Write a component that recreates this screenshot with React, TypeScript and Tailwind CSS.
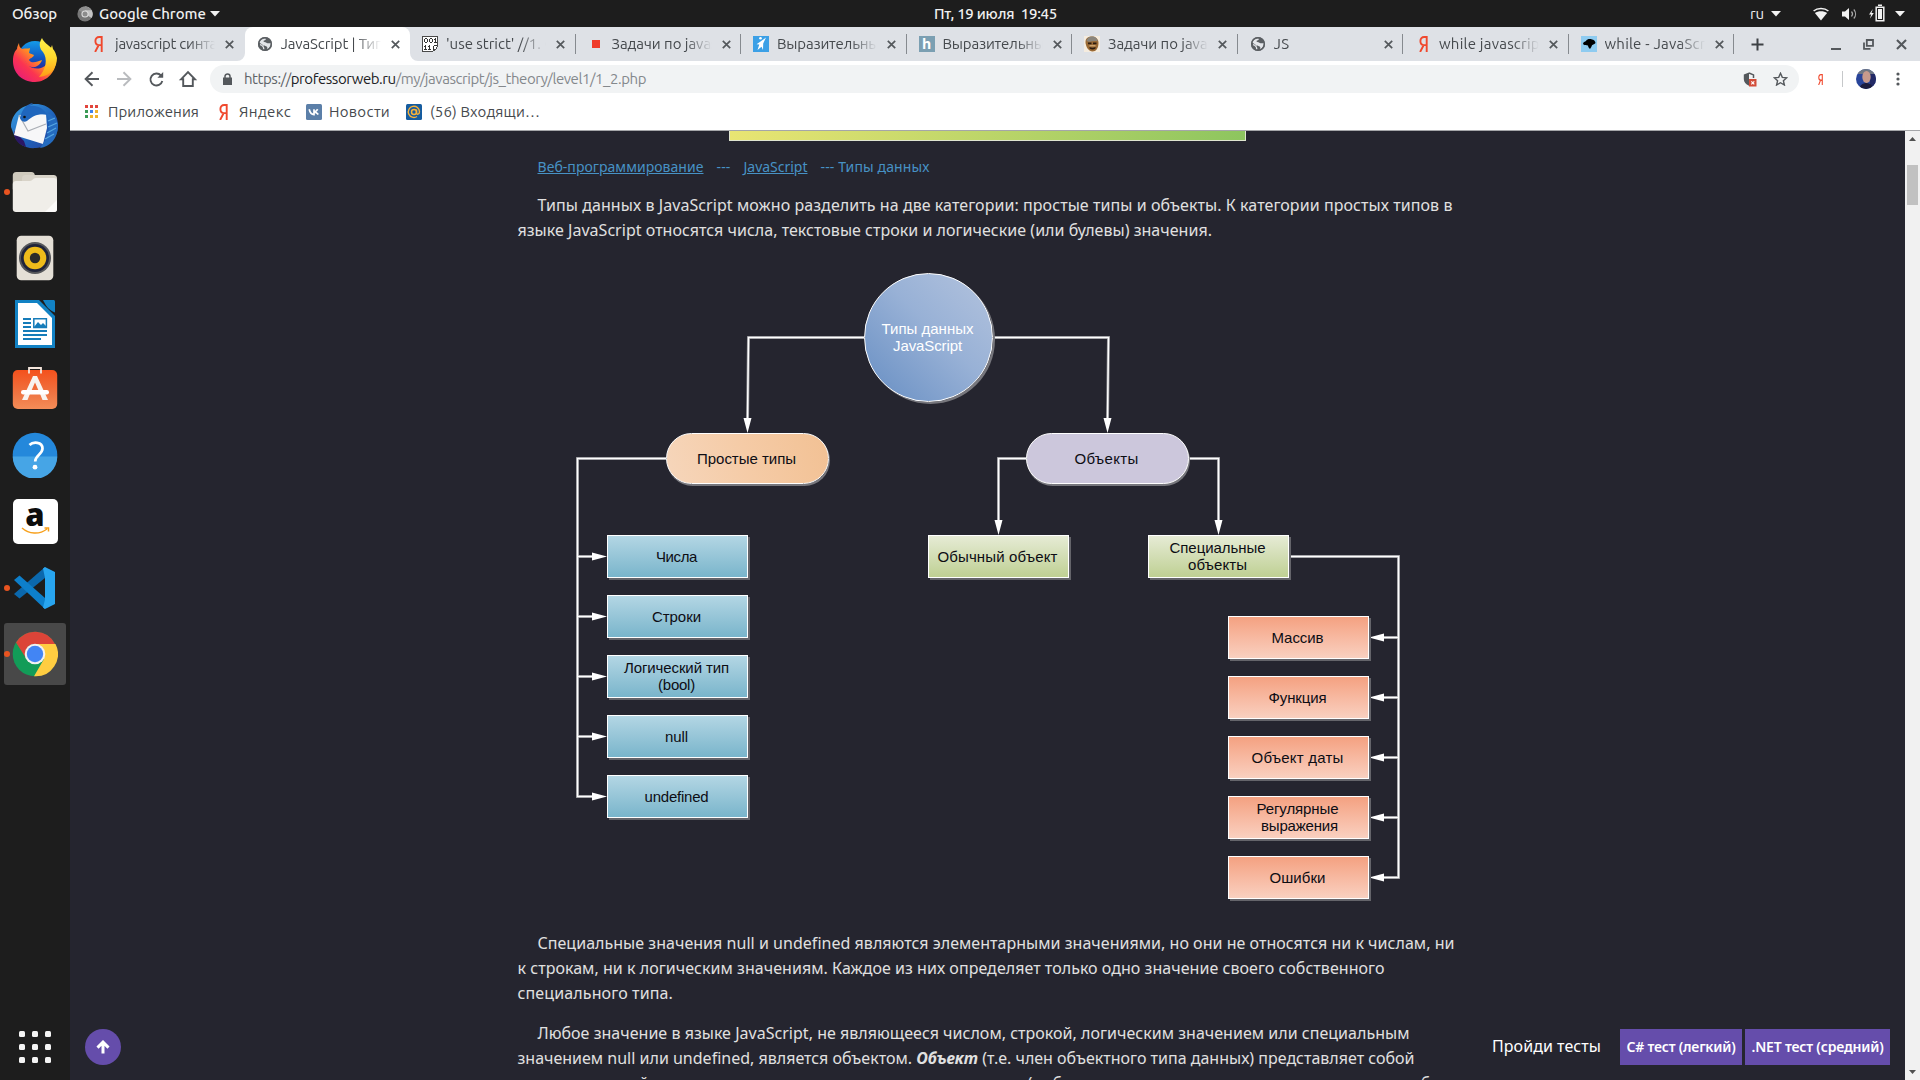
import React, { useLayoutEffect, useRef, useState } from "react";

/* Single line of text whose tracking is adjusted so that it fills `w` pixels. */
function Fit({ w, className = "", children }: { w: number; className?: string; children: React.ReactNode }) {
  const ref = useRef<HTMLSpanElement>(null);
  const [spacing, setSpacing] = useState(0);
  useLayoutEffect(() => {
    const el = ref.current;
    if (!el) return;
    const n = (el.textContent || "").length;
    setSpacing((w - el.getBoundingClientRect().width) / n);
  }, [w]);
  return (
    <span ref={ref} className={"inline-block whitespace-pre " + className} style={{ letterSpacing: spacing }}>
      {children}
    </span>
  );
}

const Caret = () => (
  <svg width="10" height="6" viewBox="0 0 10 6" className="shrink-0">
    <path d="M0 0h10L5 5.6z" fill="#f2f2f2" />
  </svg>
);

const Ya = ({ h = 16, w = 9 }: { h?: number; w?: number }) => (
  <svg width={w} height={h} viewBox="0 0 9 16" preserveAspectRatio="none">
    <path d="M7.7 0v16M7.7 1H5.2C2.9 1 1.4 2.6 1.4 5s1.4 4.1 3.6 4.1h2.7M4.6 9.2L1.1 16" fill="none" stroke="#f0482d" strokeWidth="1.9" />
  </svg>
);

const Globe = () => (
  <svg width="16" height="16" viewBox="0 0 16 16">
    <circle cx="8" cy="8" r="7" fill="#5b5f63" />
    <path d="M8.5 2.3c1 1.3-.2 2-1.3 2.3-1 .3-.8 1.4.2 1.5 1.6.1 1.8 1 3.2 1.2 1.5.2 2.9-.2 3.3-.6.2 3-1.3 5.600-3.500 6.600-.4-1.100.4-2.200-.8-2.800-1.600-.7-3.600-.2-4-1.700L2.200 6.400C2.900 4 5.300 2.100 8.500 2.300z" fill="#e4e6ea" />
    <path d="M3 8.700c1.500.1 2.400 1 3.300 2.300.5.8.2 1.700.6 2.600" fill="none" stroke="#e4e6ea" strokeWidth="1.300" />
    <circle cx="8" cy="8" r="6.300" fill="none" stroke="#5b5f63" strokeWidth="1.500" />
  </svg>
);

const Binary = () => (
  <svg width="16" height="16" viewBox="0 0 16 16" shapeRendering="crispEdges">
    <path d="M0 0h16v11h-1v2h-1v1h-1v1h-2v1H0z" fill="#4a4a4a" />
    <path d="M1 1h14v10h-1v2h-2v1h-1v1H1z" fill="#fff" />
    <path d="M3 2h2v1H3zM3 6h2v1H3zM2 3h1v3H2zM5 3h1v3H5zM8 2h2v1H8zM8 6h2v1H8zM7 3h1v3H7zM10 3h1v3h-1zM13 2h1v4h-1zM12 3h1v1h-1zM12 6h3v1h-3zM3 9h1v4H3zM2 10h1v1H2zM2 13h3v1H2zM7 9h1v4H7zM6 10h1v1H6zM6 13h3v1H6zM11 10h1v4h-1zM12 9h3v1h-3z" fill="#333" />
  </svg>
);

const icons: Record<string, React.ReactNode> = {
  ya: <Ya />,
  globe: <Globe />,
  binary: <Binary />,
  red: <span className="block h-2 w-2 bg-[#ef3b2a]" />,
  blue: (
    <svg width="16" height="16" viewBox="0 0 16 16">
      <path d="M0 0h16v16H0z" fill="#3ca0e6" />
      <circle cx="7.500" cy="2.200" r="1.300" fill="#fff" />
      <path d="M13 1.500L8.200 5 3.600 8.200l2.700.2L4.500 14l4-3.200L10 14l.2-6.500z" fill="#fff" />
    </svg>
  ),
  h: (
    <span className="flex h-4 w-4 items-center justify-center bg-[#7b9fb2] font-['Open_Sans',sans-serif] text-[14px] leading-none font-bold text-white">
      h
    </span>
  ),
  face: (
    <svg width="16" height="16" viewBox="0 0 16 16">
      <path d="M0 0h16v16H0z" fill="#f5ecdf" />
      <path d="M1.500 6c0-4 3-5.500 6.500-5.500S14.500 3 14.500 7c0 5-2.500 8.500-6 8.500S1.500 11 1.500 6z" fill="#9a6a35" />
      <path d="M2.500 5c1-4 4-4.500 6-4.500 3 0 5 2 5.200 5C10 4 6 7 2.500 5z" fill="#8a857c" />
      <path d="M4 6.500h3.500v1.700H4zM9 6.500h3.500v1.700H9zM5.500 11c2 1 4 1 6 0v1.500c-2 1.200-4 1.200-6 0z" fill="#2c1c10" />
      <path d="M5.500 9.300h6v1h-6z" fill="#e2bd88" />
    </svg>
  ),
  bird: (
    <svg width="16" height="16" viewBox="0 0 16 16">
      <path d="M0 0h16v16H0z" fill="#8ecbf0" />
      <path d="M2 8c0-2 2-2.500 3-3 1-2 4-2.500 6-1.500 1.500.2 3.500 1.500 3.500 3.500-.8 1.500-2.500 1.300-3.500 2.300-.5 1.200-1 2.700-2 3.700-1-1-2-2-2-3.500C5 9 3 9.500 2 8z" fill="#000" />
    </svg>
  ),
};

const tabs = [
  { icon: "ya", text: "javascript синтакс", w: 116 },
  { icon: "globe", text: "JavaScript | Типы", w: 114, active: true },
  { icon: "binary", text: "'use strict' //1. О", w: 110 },
  { icon: "red", text: "Задачи по javasc", w: 113 },
  { icon: "blue", text: "Выразительный", w: 111 },
  { icon: "h", text: "Выразительный", w: 111 },
  { icon: "face", text: "Задачи по javasc", w: 113 },
  { icon: "globe", text: "JS", w: 16 },
  { icon: "ya", text: "while javascript", w: 107 },
  { icon: "bird", text: "while - JavaScript", w: 120 },
];

const Cross = ({ s = 9 }: { s?: number }) => (
  <svg width={s} height={s} viewBox="0 0 9 9">
    <path d="M.8.8l7.400 7.400M8.200.8L.8 8.200" stroke="#54585c" strokeWidth="1.700" />
  </svg>
);

function TopBar() {
  return (
    <div className="flex h-[27px] items-center bg-[#1d1d1d] text-[15px] leading-[27px] font-medium text-[#f0f0f0]">
      <div className="w-[77px] pl-3"><Fit w={45}>Обзор</Fit></div>
      <svg width="16" height="16" viewBox="0 0 16 16">
        <circle cx="8" cy="8" r="7.600" fill="#777" />
        <path d="M8 8V.4A7.600 7.600 0 0 1 14.600 12z" fill="#c4c4c4" />
        <path d="M8 8L1.400 4.300A7.600 7.600 0 0 1 14.600 4.300H8z" fill="#8f8f8f" />
        <circle cx="8" cy="8" r="3.600" fill="#ddd" /><circle cx="8" cy="8" r="2.500" fill="#8c8c8c" />
      </svg>
      <div className="flex w-[841px] items-center gap-[4px] pl-[6px]"><Fit w={107}>Google Chrome</Fit><Caret /></div>
      <Fit w={123}>{"Пт, 19 июля  19:45"}</Fit>
      <div className="ml-auto flex items-center pr-[15px]">
        <Fit w={14} className="font-normal">ru</Fit>
        <div className="mr-8 ml-[7px] flex"><Caret /></div>
        <svg width="16" height="14" viewBox="0 0 16 14" className="mr-[13px]">
          <path d="M8 13.500L1.900 6C5 3.600 11 3.600 14.100 6z" fill="#f2f2f2" />
          <path d="M.6 4C4.500.6 11.500.6 15.400 4" fill="none" stroke="#f2f2f2" strokeWidth="1.500" />
        </svg>
        <svg width="15" height="14" viewBox="0 0 15 14" className="mr-3">
          <path d="M0 4.500h3L7 1v12L3 9.500H0z" fill="#f2f2f2" />
          <path d="M9.500 4.500c1.300 1.500 1.300 3.500 0 5M11.800 2.500c2.300 2.600 2.300 6.400 0 9" fill="none" stroke="#aaa" strokeWidth="1.200" />
        </svg>
        <svg width="16" height="18" viewBox="0 0 16 18" className="mr-[10px] mb-[2px]">
          <path d="M3.800 5L0 10.500h2.200L1 14.500l3.800-5.500H2.500z" fill="#f2f2f2" />
          <path d="M7.200 3.200h7.600v13.600H7.200zM9 1.300h4" fill="none" stroke="#f2f2f2" strokeWidth="1.500" />
          <path d="M9 5h4v10H9z" fill="#f2f2f2" />
        </svg>
        <Caret />
      </div>
    </div>
  );
}

function TabStrip() {
  return (
    <div className="flex h-[34px] bg-[#dee1e6] pl-[9px] text-[#45494d]">
      {tabs.map((t, i) => (
        <div
          key={i}
          className={
            "relative flex h-[34px] w-[165.5px] shrink-0 items-center pl-3 " +
            (t.active ? "rounded-t-lg bg-white" : i > 1 ? "after:absolute after:top-[7px] after:right-0 after:h-5 after:w-px after:bg-[#868a8f]" : "")
          }
        >
          {t.active && (
            <>
              <svg className="absolute bottom-0 -left-2" width="8" height="8"><path d="M8 0v8H0a8 8 0 0 0 8-8z" fill="#fff" /></svg>
              <svg className="absolute -right-2 bottom-0" width="8" height="8"><path d="M0 0v8h8a8 8 0 0 1-8-8z" fill="#fff" /></svg>
            </>
          )}
          <div className={"flex w-4 justify-center " + (i === 0 ? "-ml-px mr-px" : "")}>{icons[t.icon]}</div>
          <div className="ml-[8px] w-[100px] overflow-hidden text-[15px] leading-[34px] [mask-image:linear-gradient(to_right,#000_74%,transparent)]">
            <Fit w={t.w}>{t.text}</Fit>
          </div>
          <div className="ml-[10px] flex"><Cross /></div>
        </div>
      ))}
      <div className="flex flex-1 items-center pr-[13px] pl-[17px]">
        <svg width="13" height="13" viewBox="0 0 13 13"><path d="M6.500.5v12M.5 6.500h12" stroke="#3d4145" strokeWidth="2" /></svg>
        <div className="mt-[9px] ml-auto h-[2px] w-[10px] bg-[#54585c]" />
        <svg width="11" height="11" viewBox="0 0 11 11" className="mr-[22px] ml-[22px]">
          <path d="M3.800 1h6.200v5.800H3.800zM1 3.500v6.300h6.500" fill="none" stroke="#54585c" strokeWidth="1.800" />
        </svg>
        <Cross s={11} />
      </div>
    </div>
  );
}

function Toolbar() {
  return (
    <div className="flex h-8 items-center bg-white pt-1 pl-[14px]">
      <svg width="114" height="18" viewBox="0 0 114 18" fill="none" stroke="#54585c" strokeWidth="1.900">
        <path d="M15 9H2M8.500 2.200L1.600 9l6.900 6.800" />
        <path d="M33 9h13M39.500 2.200L46.400 9l-6.900 6.800" stroke="#b9bbbe" />
        <path d="M77 5.500A6 6 0 1 0 78.300 11" />
        <path d="M79.200 2v5.800h-5.800z" fill="#54585c" stroke="none" />
        <path d="M97 9.300L104 2l7 7.300h-2.200V16h-9.600V9.300z" />
      </svg>
      <div className="ml-3 flex h-7 w-[1589px] items-center rounded-full bg-[#f1f3f4] pr-[11px] pl-[13px]">
        <svg width="9" height="12" viewBox="0 0 9 12">
          <path d="M0 4.500h9V12H0z" fill="#54585c" /><path d="M2 5V3.200C2 .1 7 .1 7 3.200V5" fill="none" stroke="#54585c" strokeWidth="1.500" />
        </svg>
        <div className="ml-[12px] text-[15px] leading-7 text-[#84888c]">
          <Fit w={402}><span className="text-[#5f6368]">https://</span><span className="text-[#202124]">professorweb.ru</span>/my/javascript/js_theory/level1/1_2.php</Fit>
        </div>
        <svg width="14" height="15" viewBox="0 0 14 15" className="ml-auto">
          <path d="M6 .5L.8 2.600V7c0 3 2 5.600 5.200 6.700z" fill="#54585c" />
          <path d="M6 1l4.500 1.900V6" fill="none" stroke="#54585c" strokeWidth="1.500" />
          <path d="M6 7h7.500v7.500H6z" fill="#d24c38" /><path d="M8.300 9.300l3 3M11.300 9.300l-3 3" stroke="#fff" strokeWidth="1.200" />
        </svg>
        <svg width="15" height="14" viewBox="0 0 15 14" className="ml-4">
          <path d="M7.500 1.300l1.800 4.100 4.400.4-3.300 2.900 1 4.300-3.900-2.300L3.600 13l1-4.300L1.300 5.800l4.400-.4z" fill="none" stroke="#54585c" strokeWidth="1.400" />
        </svg>
      </div>
      <div className="ml-[19px] flex"><Ya h={11} w={5} /></div>
      <div className="ml-[19px] h-4 w-px bg-[#c6c8ca]" />
      <svg width="20" height="20" viewBox="0 0 20 20" className="ml-[13px]">
        <defs><clipPath id="av"><circle cx="10" cy="10" r="10" /></clipPath></defs>
        <g clipPath="url(#av)">
          <path d="M0 0h20v20H0z" fill="#28449a" /><path d="M0 0h20v5H0z" fill="#6f7783" />
          <path d="M14 5h6v12h-6z" fill="#232a66" />
          <ellipse cx="10.500" cy="8" rx="4.200" ry="6" fill="#c79a8c" />
          <path d="M3 20c1-4 4-6 7.500-6s6 2 7 6z" fill="#1b1c3d" />
        </g>
      </svg>
      <svg width="4" height="14" viewBox="0 0 4 14" className="ml-5"><g fill="#54585c"><circle cx="2" cy="2" r="1.600" /><circle cx="2" cy="7" r="1.600" /><circle cx="2" cy="12" r="1.600" /></g></svg>
    </div>
  );
}

const appDots = ["#e2453c", "#e2453c", "#e2453c", "#3b9a55", "#3f82ec", "#efb22c", "#3b9a55", "#efb22c", "#efb22c"];

function Bookmarks() {
  return (
    <div className="flex h-[38px] items-center border-b border-[#a5a6a9] bg-white pl-[15px] text-[15px] leading-[37px] text-[#45494d]">
      <div className="grid grid-cols-3 gap-[2px]">
        {appDots.map((c, i) => <span key={i} className="h-[3px] w-[3px]" style={{ background: c }} />)}
      </div>
      <Fit w={91} className="ml-[10px]">Приложения</Fit>
      <div className="ml-[20px] flex"><Ya /></div>
      <Fit w={52} className="ml-[11px]">Яндекс</Fit>
      <svg width="16" height="16" viewBox="0 0 16 16" className="ml-[15px]">
        <rect width="16" height="16" rx="1.500" fill="#5b7fa8" />
        <path d="M3.200 5.300C4 8.800 5.700 10.600 8 10.600V5.300M8 8c1.600-.2 2.700-1.200 3.700-2.700M8.300 7.800c1.800.2 2.900 1.300 4 2.800" fill="none" stroke="#fff" strokeWidth="1.700" />
      </svg>
      <Fit w={61} className="ml-[7px]">Новости</Fit>
      <svg width="16" height="16" viewBox="0 0 16 16" className="ml-[16px]">
        <rect width="16" height="16" rx="1.500" fill="#165c9f" />
        <circle cx="8" cy="8" r="2.500" fill="none" stroke="#fbb338" strokeWidth="1.500" />
        <path d="M10.500 5.500v3.300c0 2.200 3 1.800 3-1A5.600 5.600 0 1 0 11 12.500" fill="none" stroke="#fbb338" strokeWidth="1.400" />
      </svg>
      <Fit w={110} className="ml-[8px]">(56) Входящи…</Fit>
    </div>
  );
}

const dockIcons: { dot?: boolean; active?: boolean; shift?: string; art: React.ReactNode }[] = [
  { shift: "pb-[3px]", art: (
    <svg width="48" height="48" viewBox="0 0 48 48">
      <defs>
        <linearGradient id="ff1" x1="1" y1="0" x2="0" y2="1"><stop offset="0" stopColor="#ffd93b" /><stop offset=".4" stopColor="#ff9a1f" /><stop offset=".65" stopColor="#fb3550" /><stop offset="1" stopColor="#e0128a" /></linearGradient>
        <linearGradient id="ff2" x1="0" y1="0" x2="0" y2="1"><stop offset="0" stopColor="#149bea" /><stop offset=".6" stopColor="#1149b8" /><stop offset="1" stopColor="#38127a" /></linearGradient>
        <linearGradient id="ff3" x1="0" y1="0" x2="0" y2="1"><stop offset="0" stopColor="#fff04a" /><stop offset=".5" stopColor="#ffd92e" /><stop offset="1" stopColor="#ff9b16" /></linearGradient>
      </defs>
      <circle cx="24" cy="23" r="17" fill="url(#ff2)" />
      <path d="M8 8c0 3 1 5 3 6 3-1 6 0 8-1l-1 5 5 2c-1 3-4 3-5 5 2 4 8 2 13 0-3 9-14 10-17 0 2 10 20 13 25-1 2-5 0-9-2-13 5 2 7 6 8 13 1 12-9 23-21 23C10 47 2 37 2 26 2 19 4 16 6 14c0-2 1-4 2-6z" fill="url(#ff1)" />
      <path d="M31 3c-4 6-2 11 1 14 5 7 3 17-4 25 12-1 18-10 18-19-1-4-2-7-4-9l-1-4-1 3C37 9 33 8 31 3z" fill="url(#ff3)" />
    </svg>
  ) },
  { art: (
    <svg width="50" height="50" viewBox="0 0 50 50">
      <defs><linearGradient id="tb" x1="0" y1="0" x2="1" y2="1"><stop offset="0" stopColor="#3aa0e4" /><stop offset=".6" stopColor="#1d5fb8" /><stop offset="1" stopColor="#2a3f9c" /></linearGradient></defs>
      <path d="M4 34c4 10 12 14 22 13 14-1 22-11 22-23S38 3 26 3C13 3 1 12 1 26z" fill="url(#tb)" />
      <path d="M4 30c-1 8 5 14 12 16l-2-6z" fill="#2a1764" />
      <path d="M9 14l27-1 1 14-4 16L4 34z" fill="#f7f7f8" />
      <path d="M9 14l9 16 18-7" fill="none" stroke="#aaaeb5" strokeWidth="1.200" />
      <path d="M10 17C12 8 17 3 23 2l-3 3c8-1 14 3 17 9-8-2-14 1-20 6-3 2-6 0-7-3z" fill="#1f66bd" />
      <path d="M36 12c4 6 4 16 0 26l-6 9c10-1 18-10 18-22 0-6-6-12-12-13z" fill="#246bbf" />
      <path d="M38 20l7-3M38 26l9-4M37 32l9-5M35 38l9-5" stroke="#56a6e0" strokeWidth="1.200" />
      <circle cx="14.500" cy="16" r="1.300" fill="#111" />
    </svg>
  ) },
  { dot: true, art: (
    <svg width="46" height="42" viewBox="0 0 46 42">
      <rect x=".8" y="1" width="22" height="20" rx="3.500" fill="#cfcabd" /><rect x="10" y="4" width="35" height="20" rx="3.500" fill="#d8d3c8" />
      <path d="M.8 13c0-2 1.500-3 3-3h14c3 0 3-3 6-3h18c2 0 3.200 1.200 3.200 3v28c0 2-1 3-3 3H4c-2 0-3.200-1-3.200-3z" fill="#f0eee9" />
      <path d="M45 29v9c0 2-1 3-3 3h-9z" fill="#fbfaf8" />
    </svg>
  ) },
  { art: (
    <svg width="38" height="46" viewBox="0 0 38 46">
      <rect x=".7" y=".7" width="36.600" height="44.600" rx="4.500" fill="#e4dfd6" /><circle cx="19" cy="23" r="16" fill="#56575a" /><circle cx="19" cy="23" r="14" fill="#20243a" /><circle cx="19" cy="23" r="11.300" fill="#eebb1b" /><circle cx="19" cy="23" r="5.200" fill="#2a2a2a" />
    </svg>
  ) },
  { art: (
    <svg width="40" height="48" viewBox="0 0 40 48">
      <path d="M0 0h25l15 15v33H0z" fill="#1282c4" /><path d="M3 3h19l15 15v27H3z" fill="#fff" />
      <path d="M24 0h16v16z" fill="#1d1d1d" /><path d="M28 0h10c1.500 0 2 .5 2 2v10.500c-5-1.500-9-6-12-12.500z" fill="#1282c4" />
      <path d="M8 19h8M8 23h8M8 27h8M8 31h24M8 35h24M8 39h18" stroke="#167cb9" strokeWidth="1.800" />
      <path d="M18.800 18.800h12.600v8.600H18.800z" fill="none" stroke="#167cb9" strokeWidth="1.500" /><path d="M19 27l4-5 3 3 2-2 4 4z" fill="#167cb9" />
    </svg>
  ) },
  { shift: "pb-[5px]", art: (
    <svg width="46" height="44" viewBox="0 0 46 44">
      <defs><linearGradient id="sw" x1="0" y1="0" x2="0" y2="1"><stop offset="0" stopColor="#f4511c" /><stop offset=".6" stopColor="#ef7442" /><stop offset="1" stopColor="#f48d58" /></linearGradient></defs>
      <rect x=".8" y="4" width="44.400" height="39" rx="5" fill="url(#sw)" />
      <path d="M17 7.500V2h12v5.500" fill="none" stroke="#f4e6dc" strokeWidth="1.800" />
      <path d="M21 10h4l11 24h-5.500l-2-5-5.500-12.500L17.500 29l-2 5H10z" fill="#f8f3ef" />
      <rect x="9" y="24" width="28" height="4.500" rx="2.200" fill="#fff" />
    </svg>
  ) },
  { shift: "pb-[2px]", art: (
    <svg width="46" height="46" viewBox="0 0 46 46">
      <circle cx="23" cy="23" r="22.300" fill="#2488db" /><path d="M.7 24.500h44.600a22.300 22.300 0 0 1-44.600 0z" fill="#46a5e6" />
      <path d="M17.500 13c3.500-3.500 13-3.500 13 3.500 0 6-7.300 6.500-7.300 13" fill="none" stroke="#fff" strokeWidth="2.700" /><circle cx="23" cy="35.200" r="2.400" fill="#fff" />
    </svg>
  ) },
  { shift: "pb-[2px]", art: (
    <div className="flex h-[45px] w-[45px] flex-col items-center rounded-[5px] bg-white pt-[3px]">
      <span className="font-['Open_Sans',sans-serif] text-[31px] leading-[24px] font-extrabold text-[#0c0c0c]">a</span>
      <svg width="29" height="8" viewBox="0 0 29 8" className="mt-px"><path d="M1 1c7 6 17 7 25 1M23.500 1h4v3.500" fill="none" stroke="#f7a01b" strokeWidth="1.500" /></svg>
    </div>
  ) },
  { dot: true, shift: "pr-[2px]", art: (
    <svg width="44" height="44" viewBox="0 0 44 44">
      <path d="M2 28l5.500 4.500L33 12V1z" fill="#0b68ad" /><path d="M2 14l5.500-4.500L33 32v11z" fill="#0d7fcb" />
      <path d="M33 1l10 5v32l-10 5-2-1.500 2-8V12l-2-9.500z" fill="#28a5ef" />
    </svg>
  ) },
  { dot: true, active: true, art: (
    <svg width="46" height="46" viewBox="0 0 46 46">
      <circle cx="23" cy="23" r="22.300" fill="#129c58" />
      <path d="M23 13h20.500A22.300 22.300 0 0 1 22 45.300L32 28z" fill="#ffcd41" />
      <path d="M4 11.500A22.300 22.300 0 0 1 43 13H23a10 10 0 0 0-9 6z" fill="#dc4438" /><path d="M4 11.500L14.500 28 14 17z" fill="#dc4438" />
      <circle cx="23" cy="23" r="10.300" fill="#f1f1f1" /><circle cx="23" cy="23" r="8.200" fill="#4285f4" />
    </svg>
  ) },
];

function Dock() {
  return (
    <div className="flex w-[70px] shrink-0 flex-col items-center bg-[#1d1d1d]">
      {dockIcons.map((d, i) => (
        <div key={i} className="relative flex h-[66px] w-full items-center justify-center">
          <div className={"flex h-[62px] w-[62px] items-center justify-center rounded-[3px] " + (d.shift ?? "") + (d.active ? " bg-[#484848]" : "")}>{d.art}</div>
          {d.dot && <span className="absolute top-[30px] left-[4px] h-[6px] w-[6px] rounded-full bg-[#e95420]" />}
        </div>
      ))}
      <div className="mt-auto mb-[17px] grid grid-cols-3 gap-[7px]">
        {Array.from({ length: 9 }, (_, i) => <span key={i} className="h-[6px] w-[6px] rounded-[1.5px] bg-[#f4f4f4]" />)}
      </div>
    </div>
  );
}

/* Origin of the diagram's canvas. */
const OX = 517;
const OY = 255;

const blue = "bg-linear-to-b from-[#b3d6e4] to-[#79b5cb]";
const green = "bg-linear-to-b from-[#e6ebd5] to-[#bfd093]";
const orange = "bg-linear-to-b from-[#f4a181] to-[#f9d0c0]";
const nodes = [
  { x: 607, y: 535, c: blue, t: ["Числа"], w: [41] },
  { x: 607, y: 595, c: blue, t: ["Строки"], w: [49] },
  { x: 607, y: 655, c: blue, t: ["Логический тип", "(bool)"], w: [105, 37] },
  { x: 607, y: 715, c: blue, t: ["null"], w: [23] },
  { x: 607, y: 775, c: blue, t: ["undefined"], w: [64] },
  { x: 928, y: 535, c: green, t: ["Обычный объект"], w: [120] },
  { x: 1148, y: 535, c: green, t: ["Специальные", "объекты"], w: [96, 59] },
  { x: 1228, y: 616, c: orange, t: ["Массив"], w: [52] },
  { x: 1228, y: 676, c: orange, t: ["Функция"], w: [58] },
  { x: 1228, y: 736, c: orange, t: ["Объект даты"], w: [92] },
  { x: 1228, y: 796, c: orange, t: ["Регулярные", " выражения"], w: [82, 81] },
  { x: 1228, y: 856, c: orange, t: ["Ошибки"], w: [56] },
];

const wires =
  "M864 337.500H748.500L747.500 420M993 337.500H1108.500L1107.500 420M666 458.500H577.500V796.500H594" +
  "M577.500 556.500H594M577.500 616.500H594M577.500 676.500H594M577.500 736.500H594" +
  "M1026 458.500H998.500V522M1189 458.500H1218.500V522M1289 556.500H1398.500V877.500H1384" +
  "M1398.500 637.500H1384M1398.500 697.500H1384M1398.500 757.500H1384M1398.500 817.500H1384";
const down = (x: number, y: number) => `M${x} ${y}l-4-15h8z`;
const heads = [
  down(747.5, 433), down(1107.5, 433), down(998.5, 535), down(1218.5, 535),
  ...[556.5, 616.5, 676.5, 736.5, 796.5].map((y) => `M607 ${y}l-15-4v8z`),
  ...[637.5, 697.5, 757.5, 817.5, 877.5].map((y) => `M1369 ${y}l15-4v8z`),
].join("");

function Diagram() {
  return (
    <div className="relative h-[661px] w-[940px] font-['Liberation_Sans',sans-serif] text-[15px] leading-[17px] text-[#0d0d14]">
      <svg className="absolute inset-0" width="940" height="661" viewBox="517 255 940 661">
        <path d={wires} fill="none" stroke="#8d8d92" strokeWidth="3" />
        <path d={wires} fill="none" stroke="#fff" strokeWidth="1.500" />
        <path d={heads} fill="#fff" />
      </svg>
      <div className="absolute top-[18px] left-[347px] flex h-[129px] w-[129px] flex-col items-center justify-center rounded-full border border-white bg-linear-[225deg,#adbfdc_10%,#98b1d6_45%,#6f94c6_90%] pr-[2px] pb-[2px] text-white shadow-[2px_2px_0_#77777d]">
        <Fit w={92}>Типы данных</Fit>
        <Fit w={69}>JavaScript</Fit>
      </div>
      <div className="absolute top-[178px] left-[149px] flex h-[51px] w-[163px] items-center justify-center rounded-[26px] border border-white bg-linear-[75deg,#f6d6bb,#f5cba6,#f2c194] pr-[2px] shadow-[1px_2px_0_#77777d]">
        <Fit w={99}>Простые типы</Fit>
      </div>
      <div className="absolute top-[178px] left-[509px] flex h-[51px] w-[163px] items-center justify-center rounded-[26px] border border-white bg-[#ccc7dc] pr-[2px] shadow-[1px_2px_0_#77777d]">
        <Fit w={64}>Объекты</Fit>
      </div>
      {nodes.map((n, i) => (
        <div
          key={i}
          className={"absolute flex h-[43px] w-[141px] flex-col items-center justify-center border border-white pr-[2px] shadow-[2px_2px_0_#64646a] " + (n.t.length > 1 ? "pb-[2px] " : "") + n.c}
          style={{ left: n.x - OX, top: n.y - OY }}
        >
          {n.t.map((s, k) => <Fit key={k} w={n.w[k]}>{s}</Fit>)}
        </div>
      ))}
    </div>
  );
}

function Page() {
  return (
    <div className="relative flex-1 overflow-hidden bg-[#25252f] font-['Noto_Sans',sans-serif]">
      <div className="ml-[659px] h-[10px] w-[517px] border-r border-b border-l border-[#dfe5d0] bg-linear-to-r from-[#e9e573] to-[#8dc55f]" />
      <div className="ml-[447px] w-[940px] text-[16px] leading-[25px] text-[#e0e0e0]">
        <div className="mt-[14px] flex h-6 items-center pl-[20.5px] text-[14px] leading-6 text-[#4792c5]">
          <Fit w={166} className="underline">Веб-программирование</Fit>
          <Fit w={14} className="ml-[13px]">---</Fit>
          <Fit w={64} className="ml-[13px] underline">JavaScript</Fit>
          <Fit w={109} className="ml-[13px]">--- Типы данных</Fit>
        </div>
        <p className="mt-[14px] pl-[0.5px]">
          <span className="block h-[25px] pl-5"><Fit w={915}>Типы данных в JavaScript можно разделить на две категории: простые типы и объекты. К категории простых типов в</Fit></span>
          <span className="block h-[25px]"><Fit w={694.5}>языке JavaScript относятся числа, текстовые строки и логические (или булевы) значения.</Fit></span>
        </p>
        <div className="mt-[12px]"><Diagram /></div>
        <p className="mt-[15px] pl-[0.5px]">
          <span className="block h-[25px] pl-5"><Fit w={917}>Специальные значения null и undefined являются элементарными значениями, но они не относятся ни к числам, ни</Fit></span>
          <span className="block h-[25px]"><Fit w={867}>к строкам, ни к логическим значениям. Каждое из них определяет только одно значение своего собственного</Fit></span>
          <span className="block h-[25px]"><Fit w={155.5}>специального типа.</Fit></span>
        </p>
        <p className="mt-[15px] pl-[0.5px]">
          <span className="block h-[25px] pl-5"><Fit w={872}>Любое значение в языке JavaScript, не являющееся числом, строкой, логическим значением или специальным</Fit></span>
          <span className="block h-[25px]"><Fit w={897}>значением null или undefined, является объектом. <b><i>Объект</i></b> (т.е. член объектного типа данных) представляет собой</Fit></span>
          <span className="block h-[25px]"><Fit w={923}>коллекцию свойств, каждое из которых имеет имя и значение (либо простого типа, такое как число, строка, либо</Fit></span>
        </p>
      </div>
      <div className="absolute bottom-[15px] left-[15px] flex h-9 w-9 items-center justify-center rounded-full bg-[#654dab]">
        <svg width="14" height="14" viewBox="0 0 14 14"><path d="M7 13.500V2.500M1.500 7.600L7 2.100l5.500 5.500" fill="none" stroke="#fff" strokeWidth="3" /></svg>
      </div>
      <div className="absolute right-[15px] bottom-[15px] flex h-9 items-center text-white">
        <Fit w={109} className="mr-[19px] pb-[2px]">Пройди тесты</Fit>
        <div className="mr-[3px] flex h-9 w-[122px] items-center justify-center bg-[#654dab] pb-[2px] text-[14px] font-semibold"><Fit w={109}>C# тест (легкий)</Fit></div>
        <div className="flex h-9 w-[145px] items-center justify-center bg-[#654dab] pb-[2px] text-[14px] font-semibold"><Fit w={132}>.NET тест (средний)</Fit></div>
      </div>
    </div>
  );
}

export default function App() {
  return (
    <div className="flex h-[1080px] w-[1920px] flex-col overflow-hidden bg-[#1d1d1d] font-['Ubuntu','Noto_Sans',sans-serif]">
      <TopBar />
      <div className="flex min-h-0 flex-1">
        <Dock />
        <div className="flex min-w-0 flex-1 flex-col">
          <TabStrip />
          <Toolbar />
          <Bookmarks />
          <div className="flex min-h-0 flex-1">
            <Page />
            <div className="flex w-[15px] shrink-0 flex-col items-center bg-[#f1f1f1] pt-[6px] pb-[6px]">
              <svg width="7" height="4"><path d="M0 4h7L3.500 0z" fill="#505050" /></svg>
              <div className="mt-6 h-10 w-[11px] bg-[#c1c1c1]" />
              <svg width="7" height="4" className="mt-auto"><path d="M0 0h7L3.500 4z" fill="#505050" /></svg>
            </div>
          </div>
        </div>
      </div>
    </div>
  );
}
